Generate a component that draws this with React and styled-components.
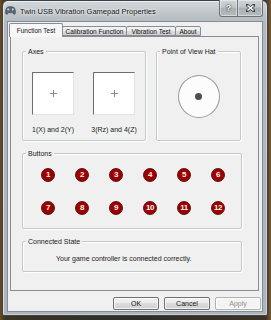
import React from "react";
import styled, { createGlobalStyle } from "styled-components";

const GlobalStyle = createGlobalStyle`
  html, body {
    margin: 0;
    padding: 0;
  }
  body {
    width: 271px;
    height: 320px;
    overflow: hidden;
    font-family: "Liberation Sans", Arial, sans-serif;
    background: linear-gradient(90deg, #6b4a22 0%, #3b3426 2%, #2f2d27 50%, #3e3326 98%, #7a5a30 100%);
  }
`;

const buttonsRow = [1, 2, 3, 4, 5, 6, 7, 8, 9, 10, 11, 12];

export default function App() {
  return (
    <>
      <GlobalStyle />
      <Window>
        <TitleBar>
          <AppIcon />
          <Title>Twin USB Vibration Gamepad Properties</Title>
          <CaptionButtons>
            <CaptionButton $w={19} $first>?</CaptionButton>
            <CaptionButton $w={26}>
              <svg width="9" height="8" viewBox="0 0 9 8">
                <path d="M1 1 L8 7 M8 1 L1 7" stroke="#3b4247" strokeWidth="3" strokeLinecap="square" />
                <path d="M1.5 1.5 L7.5 6.5 M7.5 1.5 L1.5 6.5" stroke="#fff" strokeWidth="1.6" />
              </svg>
            </CaptionButton>
          </CaptionButtons>
        </TitleBar>
        <Client>
          <Tabs>
            <Tab $active $w={54}>Function Test</Tab>
            <Tab $w={65}>Calibration Function</Tab>
            <Tab $w={50}>Vibration Test</Tab>
            <Tab $w={26}>About</Tab>
          </Tabs>
          <Panel>
            <TopRow>
              <Group $w={124} $h={90}>
                <Legend>Axes</Legend>
                <AxesRow>
                  <AxisCol>
                    <AxisBox>
                      <Cross />
                    </AxisBox>
                    <Caption>1(X) and 2(Y)</Caption>
                  </AxisCol>
                  <AxisCol>
                    <AxisBox>
                      <Cross />
                    </AxisBox>
                    <Caption>3(Rz) and 4(Z)</Caption>
                  </AxisCol>
                </AxesRow>
              </Group>
              <Group $w={85} $h={90}>
                <Legend>Point of View Hat</Legend>
                <HatArea>
                  <HatCircle>
                    <HatDot />
                  </HatCircle>
                </HatArea>
              </Group>
            </TopRow>
            <Group $w={220} $h={76}>
              <Legend>Buttons</Legend>
              <ButtonGrid>
                {buttonsRow.map((n) => (
                  <PadButton key={n}>{n}</PadButton>
                ))}
              </ButtonGrid>
            </Group>
            <Group $w={220} $h={31}>
              <Legend>Connected State</Legend>
              <StateText>Your game controller is connected correctly.</StateText>
            </Group>
          </Panel>
          <Footer>
            <DialogButton>OK</DialogButton>
            <DialogButton>Cancel</DialogButton>
            <DialogButton disabled>Apply</DialogButton>
          </Footer>
        </Client>
      </Window>
    </>
  );
}

function AppIcon() {
  return (
    <IconWrap>
      <svg width="11" height="9" viewBox="0 0 11 9">
        <path
          d="M2.5 1.2 C4 0.6 7 0.6 8.5 1.2 C10 1.8 10.8 5.5 10.2 7.6 C9.7 8.8 8.3 8.2 7.4 6.6 L3.6 6.6 C2.7 8.2 1.3 8.8 0.8 7.6 C0.2 5.5 1 1.8 2.5 1.2 Z"
          fill="#5c6a78"
          stroke="#2d3640"
          strokeWidth="0.6"
        />
        <circle cx="3.2" cy="3.4" r="0.9" fill="#dfe6ec" />
        <circle cx="7.8" cy="3.4" r="0.9" fill="#dfe6ec" />
      </svg>
    </IconWrap>
  );
}

function Cross() {
  return (
    <svg width="7" height="7" viewBox="0 0 7 7">
      <path d="M3.5 0 V7 M0 3.5 H7" stroke="#8a8a8a" strokeWidth="1" />
    </svg>
  );
}

const Window = styled.div`
  box-sizing: border-box;
  margin-left: 2px;
  width: 266px;
  height: 316px;
  border: 1px solid #3c4348;
  border-radius: 6px 6px 2px 2px;
  padding: 0 4px 3px;
  display: flex;
  flex-direction: column;
  background: linear-gradient(180deg, #d3d8db 0px, #bfc6ca 12px, #b3babf 22px, #aeb5ba 100%);
  box-shadow: inset 1px 1px 0 rgba(255, 255, 255, 0.55), inset -1px -1px 0 rgba(255, 255, 255, 0.35);
`;

const TitleBar = styled.div`
  height: 20px;
  display: flex;
  align-items: flex-start;
`;

const IconWrap = styled.div`
  margin-left: -2px;
  margin-top: 5px;
  width: 12px;
  display: flex;
`;

const Title = styled.div`
  margin-left: 3px;
  margin-top: 6px;
  font-size: 7.5px;
  line-height: 9px;
  color: #111;
  text-shadow: 0 0 4px #fff, 0 0 2px #fff;
  white-space: nowrap;
`;

const CaptionButtons = styled.div`
  margin-left: auto;
  display: flex;
  margin-top: -1px;
`;

const CaptionButton = styled.div`
  box-sizing: border-box;
  width: ${(p) => p.$w}px;
  height: 17px;
  display: flex;
  align-items: center;
  justify-content: center;
  border: 1px solid #6b7378;
  border-top: none;
  margin-left: ${(p) => (p.$first ? 0 : -1)}px;
  border-radius: ${(p) => (p.$first ? "0 0 0 3px" : "0 0 3px 0")};
  background: linear-gradient(180deg, #cfd4d7 0%, #bfc5c9 45%, #a9b0b5 50%, #b4bbbf 100%);
  box-shadow: inset 0 0 0 1px rgba(255, 255, 255, 0.45);
  color: #fff;
  font-size: 9px;
  font-weight: bold;
  text-shadow: 0 0 1px #2c3236, 0 0 2px #2c3236;
`;

const Client = styled.div`
  flex: 1;
  box-sizing: border-box;
  border: 1px solid #838d93;
  background: #f0f0f0;
  padding: 1px 3px 0 2px;
  display: flex;
  flex-direction: column;
`;

const Tabs = styled.div`
  display: flex;
  align-items: flex-end;
  height: 13px;
  margin-left: -1px;
  position: relative;
  z-index: 1;
`;

const Tab = styled.div`
  box-sizing: border-box;
  width: ${(p) => p.$w}px;
  height: ${(p) => (p.$active ? 14 : 10)}px;
  margin-bottom: ${(p) => (p.$active ? -1 : 0)}px;
  margin-left: ${(p) => (p.$active ? 0 : -1)}px;
  border: 1px solid #898c95;
  border-bottom: ${(p) => (p.$active ? "none" : "1px solid #898c95")};
  border-radius: 2px 2px 0 0;
  background: ${(p) =>
    p.$active ? "#f7f7f7" : "linear-gradient(180deg, #f3f3f3 0%, #ebebeb 50%, #dddddd 51%, #cfcfcf 100%)"};
  display: flex;
  align-items: center;
  justify-content: center;
  font-size: 6.5px;
  color: #111;
  white-space: nowrap;
  position: relative;
  z-index: ${(p) => (p.$active ? 2 : 1)};
`;

const Panel = styled.div`
  box-sizing: border-box;
  width: 249px;
  height: 255px;
  border: 1px solid #898c95;
  background: #f0f0f0;
  padding: 14px 0 0 11px;
  display: flex;
  flex-direction: column;
  gap: 12px;
`;

const TopRow = styled.div`
  display: flex;
  gap: 10px;
`;

const Group = styled.div`
  box-sizing: border-box;
  position: relative;
  width: ${(p) => p.$w}px;
  height: ${(p) => p.$h}px;
  border: 1px solid #c3c8cb;
  border-radius: 2px;
  box-shadow: inset 1px 1px 0 #fff, 1px 1px 0 #fff;
`;

const Legend = styled.span`
  position: absolute;
  top: -5px;
  left: 3px;
  padding: 0 2px;
  background: #f0f0f0;
  font-size: 7px;
  line-height: 9px;
  color: #222;
  white-space: nowrap;
`;

const AxesRow = styled.div`
  display: flex;
  gap: 19px;
  padding: 20px 0 0 9px;
`;

const AxisCol = styled.div`
  width: 42px;
  display: flex;
  flex-direction: column;
  align-items: center;
  gap: 10px;
`;

const AxisBox = styled.div`
  box-sizing: border-box;
  width: 42px;
  height: 43px;
  background: #fff;
  border-top: 1px solid #6e6e6e;
  border-left: 1px solid #6e6e6e;
  border-right: 1px solid #e3e3e3;
  border-bottom: 1px solid #e3e3e3;
  display: flex;
  align-items: center;
  justify-content: center;
`;

const Caption = styled.div`
  font-size: 7px;
  line-height: 9px;
  color: #222;
  white-space: nowrap;
`;

const HatArea = styled.div`
  height: 100%;
  display: flex;
  align-items: center;
  justify-content: center;
`;

const HatCircle = styled.div`
  box-sizing: border-box;
  width: 42px;
  height: 43px;
  border-radius: 50%;
  border: 1px solid #9a9a9a;
  background: #fcfcfc;
  display: flex;
  align-items: center;
  justify-content: center;
`;

const HatDot = styled.div`
  width: 7px;
  height: 7px;
  border-radius: 50%;
  background: #4e4e4e;
`;

const ButtonGrid = styled.div`
  height: 100%;
  display: grid;
  grid-template-columns: repeat(6, 34px);
  grid-auto-rows: 14px;
  row-gap: 19px;
  align-content: center;
  justify-content: center;
  justify-items: center;
  padding-left: 2px;
`;

const PadButton = styled.div`
  box-sizing: border-box;
  width: 14px;
  height: 14px;
  border-radius: 50%;
  background: radial-gradient(circle at 50% 45%, #a80000 0%, #960000 70%, #7a0000 100%);
  border: 1px solid #5a1010;
  display: flex;
  align-items: center;
  justify-content: center;
  color: #f4f4f4;
  font-size: 8px;
  font-weight: bold;
  letter-spacing: -0.5px;
`;

const StateText = styled.div`
  padding: 12px 0 0 33px;
  font-size: 7px;
  line-height: 9px;
  color: #222;
  white-space: nowrap;
`;

const Footer = styled.div`
  display: flex;
  justify-content: flex-end;
  gap: 5px;
  margin-top: 6px;
  width: 251px;
`;

const DialogButton = styled.button`
  box-sizing: border-box;
  width: 46px;
  height: 13px;
  padding: 0;
  border: 1px solid ${(p) => (p.disabled ? "#adb2b5" : "#707070")};
  border-radius: 2px;
  background: ${(p) =>
    p.disabled
      ? "#f4f4f4"
      : "linear-gradient(180deg, #f2f2f2 0%, #ebebeb 45%, #dddddd 50%, #cfcfcf 100%)"};
  box-shadow: inset 0 0 0 1px rgba(255, 255, 255, 0.7);
  font-family: "Liberation Sans", Arial, sans-serif;
  font-size: 7px;
  line-height: 11px;
  color: ${(p) => (p.disabled ? "#8d8d8d" : "#111")};
`;
